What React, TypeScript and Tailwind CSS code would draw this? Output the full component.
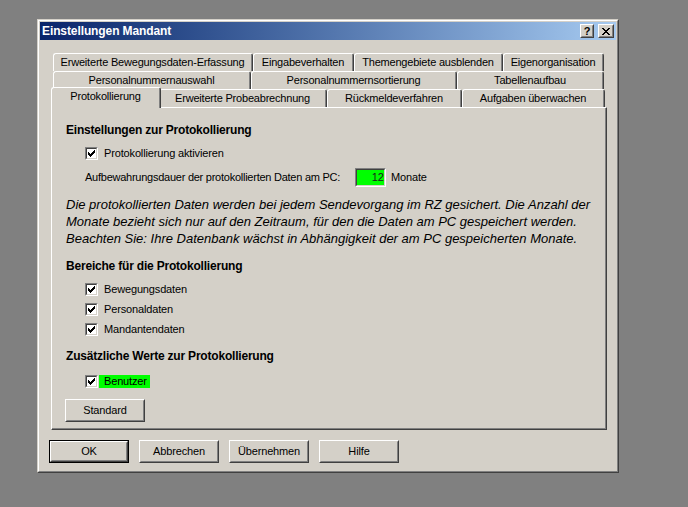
import React from "react";

const FONT = "font-['Liberation_Sans',Arial,sans-serif]";

function CheckGlyph() {
  const cells: [number, number][] = [
    [0, 2], [0, 3], [0, 4],
    [1, 3], [1, 4], [1, 5],
    [2, 4], [2, 5], [2, 6],
    [3, 3], [3, 4], [3, 5],
    [4, 2], [4, 3], [4, 4],
    [5, 1], [5, 2], [5, 3],
    [6, 0], [6, 1], [6, 2],
  ];
  return (
    <svg width="7" height="7" viewBox="0 0 7 7" shapeRendering="crispEdges">
      {cells.map(([x, y]) => (
        <rect key={`${x}-${y}`} x={x} y={y} width="1" height="1" fill="#000" />
      ))}
    </svg>
  );
}

function CloseGlyph() {
  const rows = [
    "XX....XX",
    ".XX..XX.",
    "..XXXX..",
    "...XX...",
    "..XXXX..",
    ".XX..XX.",
    "XX....XX",
  ];
  const cells: [number, number][] = [];
  rows.forEach((r, y) =>
    r.split("").forEach((c, x) => {
      if (c === "X") cells.push([x, y]);
    })
  );
  return (
    <svg width="8" height="7" viewBox="0 0 8 7" shapeRendering="crispEdges">
      {cells.map(([x, y]) => (
        <rect key={`${x}-${y}`} x={x} y={y} width="1" height="1" fill="#000" />
      ))}
    </svg>
  );
}

function Checkbox() {
  return (
    <div className="w-[13px] h-[13px] shrink-0 border border-t-[#808080] border-l-[#808080] border-r-white border-b-white">
      <div className="w-full h-full border border-t-[#404040] border-l-[#404040] border-r-[#d4d0c8] border-b-[#d4d0c8] bg-white flex items-center justify-center">
        <CheckGlyph />
      </div>
    </div>
  );
}

function Raised({ className, children }: { className: string; children: React.ReactNode }) {
  return (
    <div className={`${className} shrink-0 border border-t-white border-l-white border-r-[#404040] border-b-[#404040]`}>
      <div className="w-full h-full border border-t-[#d4d0c8] border-l-[#d4d0c8] border-r-[#808080] border-b-[#808080] flex items-center justify-center bg-[#d4d0c8]">
        {children}
      </div>
    </div>
  );
}

function Btn({ label, isDefault }: { label: string; isDefault?: boolean }) {
  if (isDefault) {
    return (
      <div className="w-[80px] h-[23px] shrink-0 border border-black">
        <Raised className="w-full h-full">
          <span className="tracking-[-0.15px]">{label}</span>
        </Raised>
      </div>
    );
  }
  return (
    <Raised className="w-[80px] h-[23px]">
      <span className="tracking-[-0.15px]">{label}</span>
    </Raised>
  );
}

function Tab({ label, w }: { label: string; w: string }) {
  return (
    <div className={`${w} h-[18px] shrink-0 rounded-t-[3px] border-t border-l border-r border-t-white border-l-white border-r-[#404040] bg-[#d4d0c8]`}>
      <div className="h-full w-full border-r border-r-[#808080] flex items-center justify-center whitespace-nowrap tracking-[-0.2px]">
        {label}
      </div>
    </div>
  );
}

function CheckRow({ label, mt }: { label: string; mt: string }) {
  return (
    <div className={`${mt} ml-[19px] flex items-center h-[13px]`}>
      <Checkbox />
      <span className="ml-[6px] tracking-[-0.15px] whitespace-nowrap">{label}</span>
    </div>
  );
}

function Heading({ children, mt }: { children: React.ReactNode; mt: string }) {
  return (
    <div className={`${mt} h-[16px] leading-[16px] text-[12px] font-bold tracking-[-0.2px] whitespace-nowrap`}>
      {children}
    </div>
  );
}

export default function App() {
  return (
    <div className={`w-[688px] h-[507px] bg-[#808080] pt-[19px] pl-[37px] overflow-hidden ${FONT} text-[11px] text-black`}>
      <div className="w-[582px] h-[454px] border border-t-[#d4d0c8] border-l-[#d4d0c8] border-r-[#404040] border-b-[#404040]">
        <div className="w-full h-full border border-t-white border-l-white border-r-[#808080] border-b-[#808080] bg-[#d4d0c8] p-[1px] flex flex-col">
          {/* Title bar */}
          <div className="h-[18px] shrink-0 flex items-center pl-[2px] pr-[2px] bg-linear-to-r from-[#0a246a] to-[#a6caf0]">
            <span className="text-white font-bold text-[12px] tracking-[-0.1px] whitespace-nowrap">Einstellungen Mandant</span>
            <div className="ml-auto flex items-center gap-[4px]">
              <Raised className="w-[14px] h-[14px]">
                <span className="font-bold text-[11px] leading-none">?</span>
              </Raised>
              <Raised className="w-[16px] h-[14px]">
                <CloseGlyph />
              </Raised>
            </div>
          </div>

          {/* Tab control */}
          <div className="ml-[11px] mt-[13px] w-[556px] flex flex-col shrink-0">
            <div className="flex h-[18px] pl-[2px]">
              <Tab label="Erweiterte Bewegungsdaten-Erfassung" w="w-[200px]" />
              <Tab label="Eingabeverhalten" w="w-[101px]" />
              <Tab label="Themengebiete ausblenden" w="w-[149px]" />
              <Tab label="Eigenorganisation" w="w-[101px]" />
            </div>
            <div className="flex h-[18px] pl-[2px]">
              <Tab label="Personalnummernauswahl" w="w-[198px]" />
              <Tab label="Personalnummernsortierung" w="w-[206px]" />
              <Tab label="Tabellenaufbau" w="w-[147px]" />
            </div>
            <div className="flex items-end h-[18px] relative z-10">
              <div className="w-[110px] h-[21px] -mb-[1px] -mr-[2px] shrink-0 relative z-10 rounded-t-[3px] border-t border-l border-r border-t-white border-l-white border-r-[#404040] bg-[#d4d0c8]">
                <div className="h-full w-full border-r border-r-[#808080] flex justify-center">
                  <span className="leading-[16px] tracking-[-0.2px] whitespace-nowrap">Protokollierung</span>
                </div>
              </div>
              <Tab label="Erweiterte Probeabrechnung" w="w-[168px]" />
              <Tab label="Rückmeldeverfahren" w="w-[135px]" />
              <Tab label="Aufgaben überwachen" w="w-[143px]" />
            </div>

            {/* Panel */}
            <div className="h-[323px] border border-t-white border-l-white border-r-[#404040] border-b-[#404040]">
              <div className="w-full h-full border-r border-b border-r-[#808080] border-b-[#808080] pl-[14px] flex flex-col">
                <Heading mt="mt-[14px]">Einstellungen zur Protokollierung</Heading>
                <CheckRow mt="mt-[9px]" label="Protokollierung aktivieren" />
                <div className="mt-[8px] ml-[19px] h-[19px] flex items-center">
                  <span className="w-[270px] shrink-0 tracking-[-0.25px] whitespace-nowrap">
                    Aufbewahrungsdauer der protokollierten Daten am PC:
                  </span>
                  <div className="w-[31px] h-[19px] shrink-0 border border-t-[#808080] border-l-[#808080] border-r-white border-b-white">
                    <div className="w-full h-full border border-t-[#404040] border-l-[#404040] border-r-[#d4d0c8] border-b-[#d4d0c8] bg-[#00ff00] flex items-center justify-end text-[#1a1a1a]">
                      12
                    </div>
                  </div>
                  <span className="ml-[5px] tracking-[-0.15px]">Monate</span>
                </div>
                <p className="mt-[9px] text-[13px] italic leading-[17px] whitespace-nowrap">
                  Die protokollierten Daten werden bei jedem Sendevorgang im RZ gesichert. Die Anzahl der
                  <br />
                  Monate bezieht sich nur auf den Zeitraum, für den die Daten am PC gespeichert werden.
                  <br />
                  Beachten Sie: Ihre Datenbank wächst in Abhängigkeit der am PC gespeicherten Monate.
                </p>
                <Heading mt="mt-[11px]">Bereiche für die Protokollierung</Heading>
                <CheckRow mt="mt-[9px]" label="Bewegungsdaten" />
                <CheckRow mt="mt-[7px]" label="Personaldaten" />
                <CheckRow mt="mt-[7px]" label="Mandantendaten" />
                <Heading mt="mt-[12px]">Zusätzliche Werte zur Protokollierung</Heading>
                <div className="mt-[11px] ml-[19px] flex items-center h-[13px]">
                  <Checkbox />
                  <span className="ml-[1px] h-[13px] bg-[#00ff00] pl-[5px] pr-[3px] flex items-center tracking-[-0.15px]">
                    Benutzer
                  </span>
                </div>
                <div className="mt-[11px] -ml-[1px]">
                  <Btn label="Standard" />
                </div>
              </div>
            </div>
          </div>

          {/* Buttons */}
          <div className="mt-[10px] ml-[9px] flex gap-[10px]">
            <Btn label="OK" isDefault />
            <Btn label="Abbrechen" />
            <Btn label="Übernehmen" />
            <Btn label="Hilfe" />
          </div>
        </div>
      </div>
    </div>
  );
}
